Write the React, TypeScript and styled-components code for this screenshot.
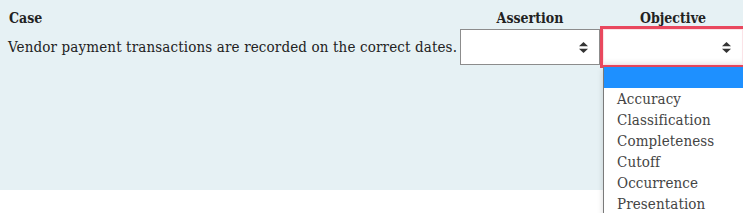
import React from "react";
import styled, { createGlobalStyle } from "styled-components";

const Global = createGlobalStyle`
  html, body { margin: 0; padding: 0; background: #fff; overflow: hidden; }
  body { min-height: 100vh; font-family: "DejaVu Serif Condensed", "DejaVu Serif", serif; color: #222; }
`;

const Panel = styled.div`
  background: #e6f1f4;
  height: 190px;
  box-sizing: border-box;
  padding: 8px 0 0 8px;
`;

const Grid = styled.div`
  display: grid;
  grid-template-columns: minmax(0, 1fr) 140px 140px;
  column-gap: 3px;
  row-gap: 1px;
  align-items: center;
`;

const HeadCell = styled.div<{ $center?: boolean }>`
  font-weight: bold;
  font-size: 14px;
  line-height: 20px;
  text-align: ${(p) => (p.$center ? "center" : "left")};
  padding-left: ${(p) => (p.$center ? "0" : "1px")};
`;

const CaseText = styled.div`
  font-size: 15px;
  line-height: 20px;
  letter-spacing: 0.14px;
  white-space: nowrap;
`;

const SelectWrap = styled.div`
  position: relative;
`;

const SelectBox = styled.div<{ $focused?: boolean }>`
  height: 36px;
  box-sizing: border-box;
  background: #fff;
  border: 1px solid ${(p) => (p.$focused ? "#fbe3e7" : "#8c8c8c")};
  box-shadow: ${(p) =>
    p.$focused
      ? "0 0 0 3px #e9485e, inset 0 -5px 5px -3px rgba(0,0,0,0.08)"
      : "none"};
  display: flex;
  align-items: center;
  justify-content: flex-end;
  padding-right: 11px;
`;

const Menu = styled.div`
  position: absolute;
  left: 0;
  top: 38px;
  width: 140px;
  background: #fff;
  border-left: 1px solid #7a7a7a;
  box-shadow: 0 2px 6px rgba(0, 0, 0, 0.15);
  z-index: 5;
`;

const Option = styled.div<{ $active?: boolean }>`
  height: 21px;
  line-height: 22px;
  padding-left: 13px;
  font-size: 15px;
  letter-spacing: 0.1px;
  color: #444;
  background: ${(p) => (p.$active ? "#1e90ff" : "#fff")};
  white-space: nowrap;
`;

const Arrows = () => (
  <svg width="9" height="11" viewBox="0 0 9 11">
    <path d="M4.5 0 L9 4.3 L0 4.3 Z" fill="#333" />
    <path d="M4.5 11 L9 6.7 L0 6.7 Z" fill="#333" />
  </svg>
);

const options = [
  "",
  "Accuracy",
  "Classification",
  "Completeness",
  "Cutoff",
  "Occurrence",
  "Presentation",
];

export default function App() {
  return (
    <>
      <Global />
      <Panel>
        <Grid>
          <HeadCell>Case</HeadCell>
          <HeadCell $center>Assertion</HeadCell>
          <HeadCell $center>Objective</HeadCell>
          <CaseText>Vendor payment transactions are recorded on the correct dates.</CaseText>
          <SelectWrap>
            <SelectBox>
              <Arrows />
            </SelectBox>
          </SelectWrap>
          <SelectWrap>
            <SelectBox $focused>
              <Arrows />
            </SelectBox>
            <Menu>
              {options.map((o, i) => (
                <Option key={i} $active={i === 0}>
                  {o}
                </Option>
              ))}
            </Menu>
          </SelectWrap>
        </Grid>
      </Panel>
    </>
  );
}
